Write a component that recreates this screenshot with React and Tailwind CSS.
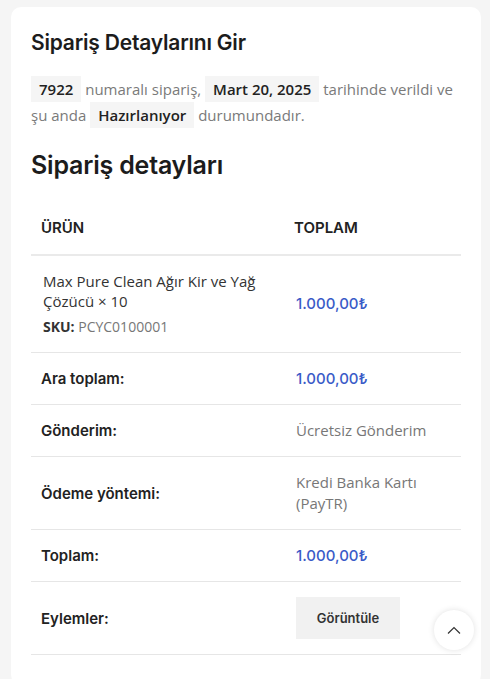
import React from "react";

const H = { fontFamily: "Inter, Lato, sans-serif" };
const B = { fontFamily: "'Open Sans', sans-serif" };

function Row({ label, children }) {
  return (
    <div className="grid grid-cols-[255px_1fr] border-b border-[#e6e6e6]">
      <div className="flex items-center py-[15px] pl-[10px] pr-[10px] text-[15px] leading-[21px] font-semibold text-[#222]" style={H}>
        {label}
      </div>
      <div className="flex items-center py-[15px] px-[10px] text-[15px] leading-[21px]">{children}</div>
    </div>
  );
}

function Price() {
  return (
    <span className="text-[15px] font-medium text-[#3a5bc8]" style={H}>
      1.000,00₺
    </span>
  );
}

export default function App() {
  return (
    <div className="min-h-[679px] bg-[#f5f5f5] pl-[11px] pr-[9px] pt-[7px] relative">
      <div className="bg-white rounded-[10px] px-[20px] pt-[22px] pb-[30px]">
        <h2 className="text-[21px] leading-[28px] font-semibold text-[#1c1c1c] tracking-[-0.2px]" style={H}>
          Sipariş Detaylarını Gir
        </h2>
        <p className="mt-[19px] text-[15px] leading-[26px] text-[#7a7a7a]" style={B}>
          <mark className="bg-[#f5f5f5] text-[#222] font-semibold px-[8px] py-[3px]">7922</mark> numaralı sipariş,{" "}
          <mark className="bg-[#f5f5f5] text-[#222] font-semibold px-[8px] py-[3px]">Mart 20, 2025</mark> tarihinde verildi ve şu anda{" "}
          <mark className="bg-[#f5f5f5] text-[#222] font-semibold px-[8px] py-[3px]">Hazırlanıyor</mark> durumundadır.
        </p>
        <h2 className="mt-[20px] text-[25px] leading-[34px] font-semibold text-[#1c1c1c] tracking-[-0.2px]" style={H}>
          Sipariş detayları
        </h2>
        <div className="mt-[20px]">
          <div className="grid grid-cols-[255px_1fr] border-b-2 border-[#eaeaea]">
            <div className="py-[15px] px-[10px] text-[15px] leading-[22px] font-semibold text-[#222] uppercase" style={H}>Ürün</div>
            <div className="py-[15px] px-[8px] text-[15px] leading-[22px] font-semibold text-[#222] uppercase" style={H}>Toplam</div>
          </div>
          <div className="grid grid-cols-[255px_1fr] border-b border-[#e6e6e6]">
            <div className="py-[15px] pl-[12px] pr-[10px] text-[15px] leading-[20px] text-[#333]" style={B}>
              <div>Max Pure Clean Ağır Kir ve Yağ Çözücü × 10</div>
              <div className="mt-[6px] text-[14px] text-[#777]">
                <span className="font-bold text-[#333]">SKU:</span> PCYC0100001
              </div>
            </div>
            <div className="flex items-center py-[15px] px-[10px]">
              <Price />
            </div>
          </div>
          <Row label="Ara toplam:"><Price /></Row>
          <Row label="Gönderim:">
            <span className="text-[#777]" style={B}>Ücretsiz Gönderim</span>
          </Row>
          <Row label="Ödeme yöntemi:">
            <span className="text-[#777]" style={B}>Kredi Banka Kartı (PayTR)</span>
          </Row>
          <Row label="Toplam:"><Price /></Row>
          <Row label="Eylemler:">
            <button className="h-[42px] w-[104px] bg-[#f1f1f1] text-[13px] font-semibold text-[#333]" style={H}>
              Görüntüle
            </button>
          </Row>
        </div>
      </div>
      <button className="absolute left-[434px] top-[610px] w-[40px] h-[40px] rounded-full bg-white shadow-[0_0_6px_rgba(0,0,0,0.12)] flex items-center justify-center">
        <svg width="14" height="8" viewBox="0 0 14 8" fill="none" stroke="#333" strokeWidth="1.2">
          <path d="M1 7.5 L7 1.5 L13 7.5" />
        </svg>
      </button>
    </div>
  );
}
